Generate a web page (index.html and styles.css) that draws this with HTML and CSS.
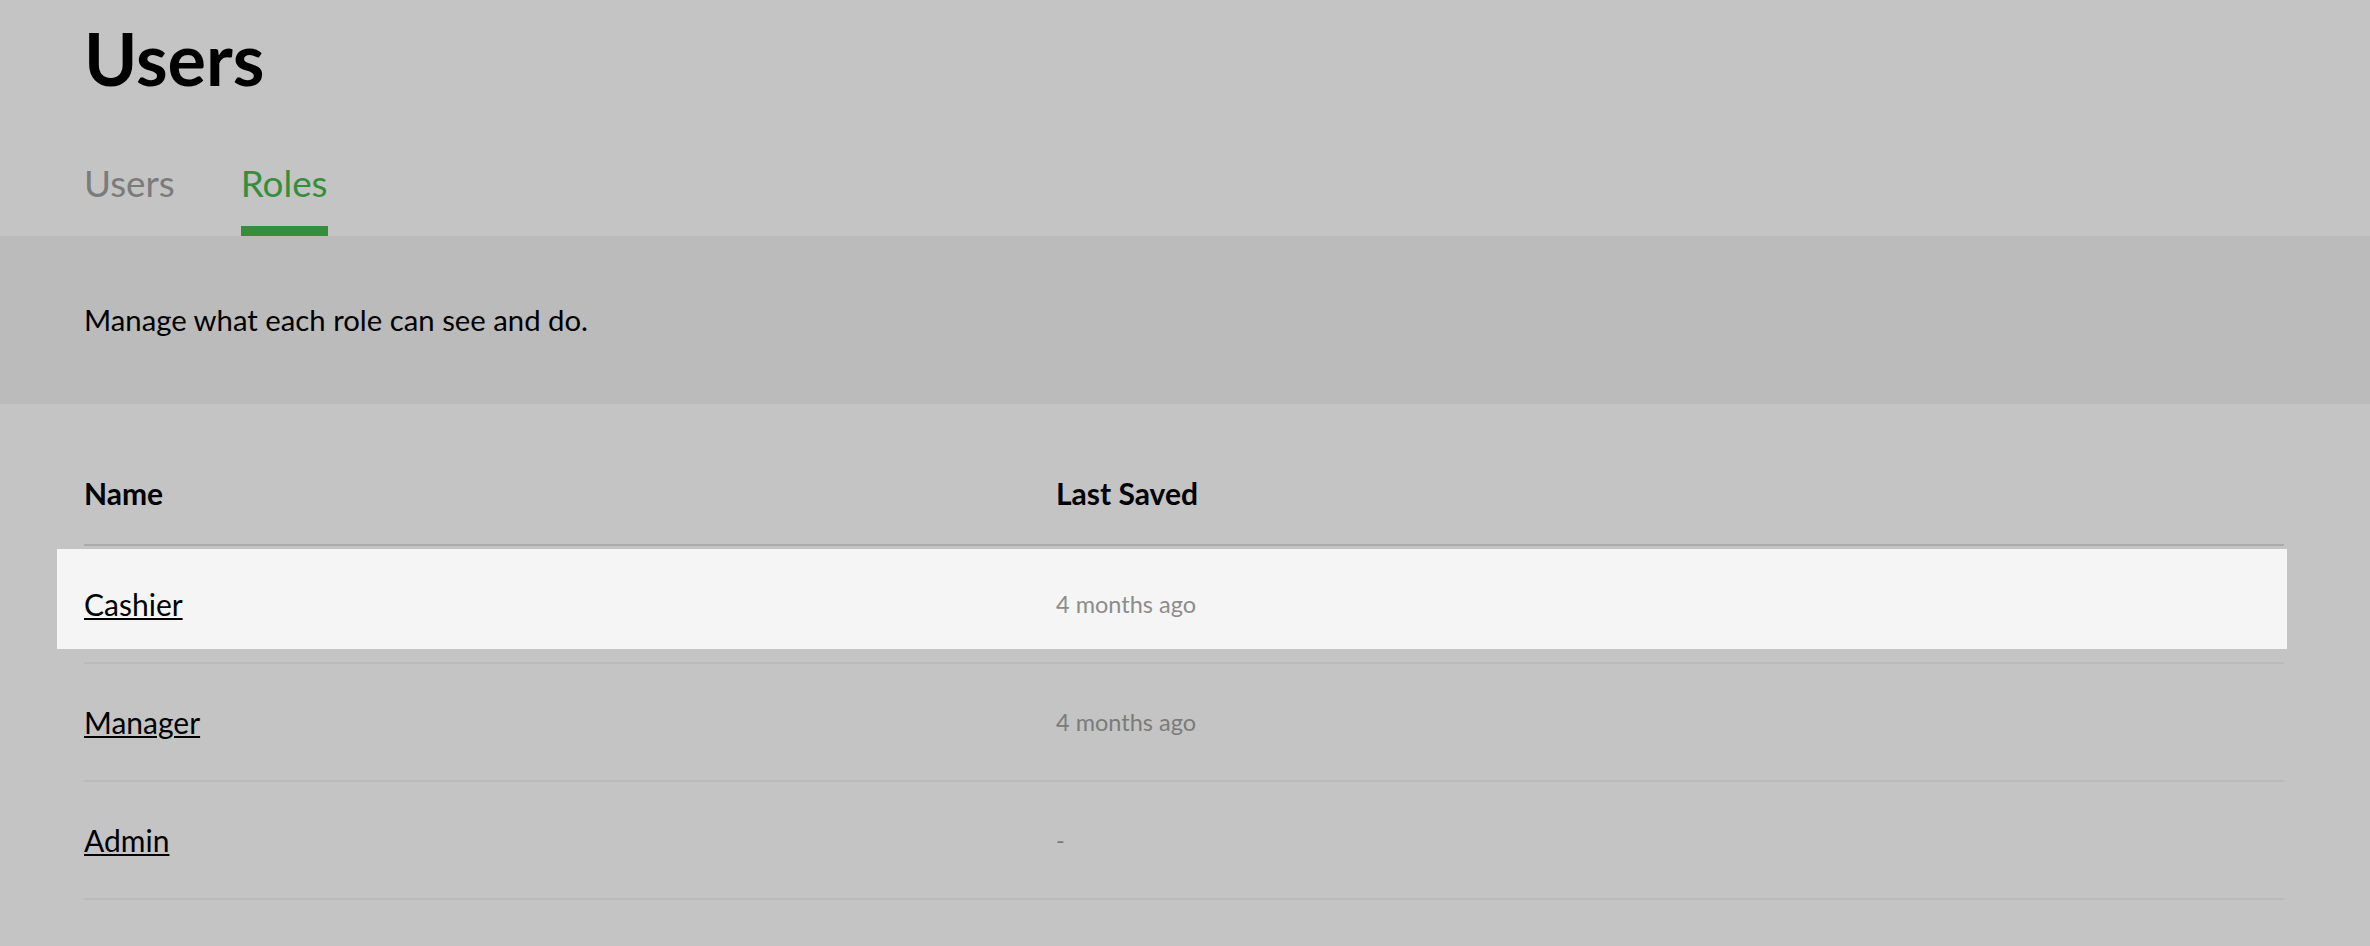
FILE: index.html
```html
<!DOCTYPE html>
<html lang="en">
<head>
<meta charset="utf-8">
<title>Users</title>
<link rel="stylesheet" href="styles.css">
</head>
<body>
<header class="page-header">
  <h1 class="page-title">Users</h1>
  <nav class="tabs">
    <a class="tab" href="#">Users</a>
    <a class="tab tab-active" href="#">Roles</a>
  </nav>
</header>
<section class="intro">
  <p class="intro-text">Manage what each role can see and do.</p>
</section>
<section class="roles">
  <div class="roles-head">
    <div class="cell-head">Name</div>
    <div class="cell-head">Last Saved</div>
  </div>
  <div class="roles-row row-highlight">
    <div class="cell-name"><a href="#" class="role-link">Cashier</a></div>
    <div class="cell-date">4 months ago</div>
  </div>
  <div class="roles-row">
    <div class="cell-name"><a href="#" class="role-link">Manager</a></div>
    <div class="cell-date">4 months ago</div>
  </div>
  <div class="roles-row">
    <div class="cell-name"><a href="#" class="role-link">Admin</a></div>
    <div class="cell-date">-</div>
  </div>
</section>
</body>
</html>
```
FILE: styles.css
```css
* { box-sizing: border-box; }
html, body {
  margin: 0;
  padding: 0;
  background: #c4c4c4;
  font-family: Lato, "Open Sans", "Liberation Sans", sans-serif;
  color: #000;
}
.page-header {
  padding: 15px 86px 0 84px;
}
.page-title {
  margin: 0;
  font-size: 72px;
  line-height: 86px;
  font-weight: 700;
  color: #000;
}
.tabs {
  display: flex;
  gap: 66px;
  margin-top: 60px;
}
.tab {
  display: block;
  font-size: 36.8px;
  line-height: 44px;
  padding-bottom: 21px;
  border-bottom: 10px solid transparent;
  color: #7b7b7b;
  text-decoration: none;
}
.tab-active {
  color: #348e3c;
  border-bottom-color: #348e3c;
}
.intro {
  background: #bbbbbb;
  padding: 66px 86px 66px 84px;
}
.intro-text {
  margin: 0;
  font-size: 29.3px;
  line-height: 36px;
  color: #000;
}
.roles {
  padding: 71px 86px 0 84px;
}
.roles-head,
.roles-row {
  display: grid;
  grid-template-columns: 972px 1fr;
  align-items: center;
}
.roles-head {
  padding-bottom: 33px;
  border-bottom: 2px solid #aaaaaa;
}
.cell-head {
  font-size: 30px;
  line-height: 36px;
  font-weight: 700;
}
.roles-row {
  position: relative;
  height: 118px;
  border-bottom: 2px solid #bbbbbb;
}
.row-highlight::before {
  content: "";
  position: absolute;
  top: 3px;
  bottom: 13px;
  left: -27px;
  right: -3px;
  background: #f5f5f5;
}
.cell-name,
.cell-date {
  position: relative;
}
.role-link {
  font-size: 30px;
  line-height: 36px;
  color: #000;
  text-decoration: underline;
  text-decoration-thickness: 2px;
  text-underline-offset: 2px;
}
.cell-date {
  font-size: 23.5px;
  line-height: 30px;
  color: #7b7b7b;
}
.row-highlight .cell-date {
  color: #8c8c8c;
}
```
